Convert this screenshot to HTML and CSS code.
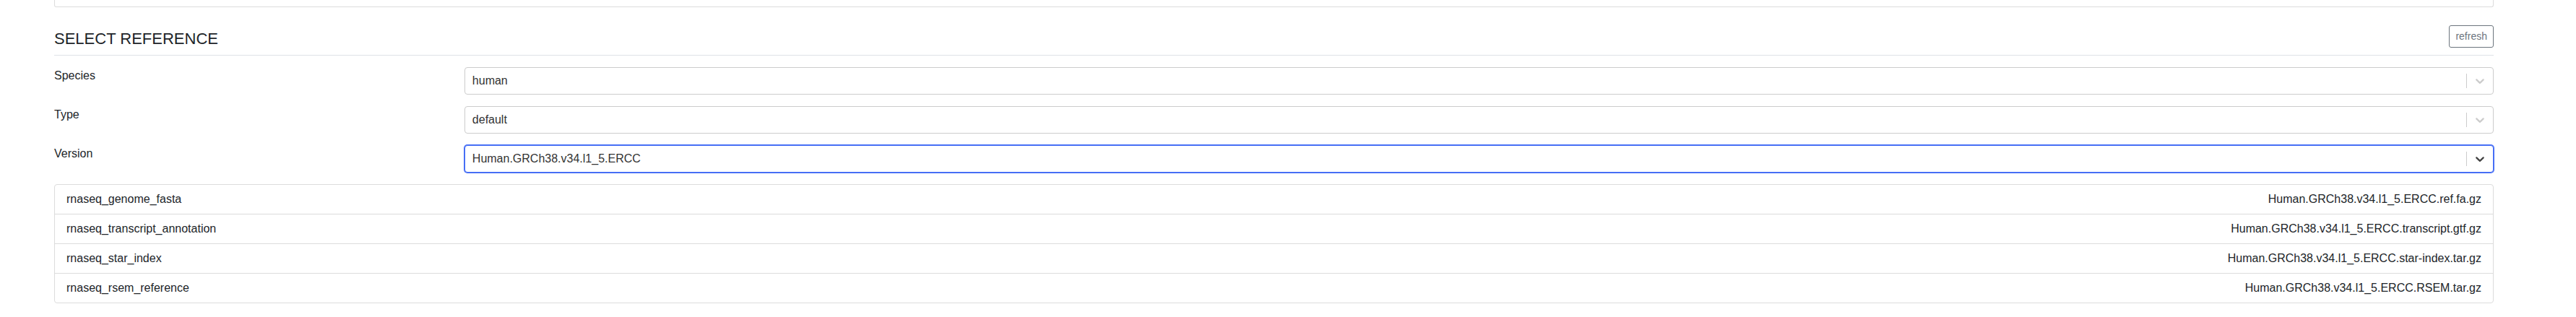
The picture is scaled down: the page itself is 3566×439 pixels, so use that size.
FILE: index.html
```html
<!DOCTYPE html>
<html lang="en">
<head>
<meta charset="utf-8">
<title>Select reference</title>
<link rel="stylesheet" href="styles.css">
</head>
<body>
<div class="page">
  <div class="prev-card"></div>

  <div class="section-header">
    <h4 class="section-title">SELECT REFERENCE</h4>
    <button class="btn-refresh" type="button">refresh</button>
  </div>

  <div class="form-row">
    <label class="form-label">Species</label>
    <div class="select">
      <div class="select-value">human</div>
      <span class="select-sep"></span>
      <span class="select-arrow">
        <svg width="20" height="20" viewBox="0 0 20 20"><path d="M4.516 7.548c0.436-0.446 1.043-0.481 1.576 0l3.908 3.747 3.908-3.747c0.533-0.481 1.141-0.446 1.574 0 0.436 0.445 0.408 1.197 0 1.615-0.406 0.418-4.695 4.502-4.695 4.502-0.217 0.223-0.502 0.335-0.787 0.335s-0.57-0.112-0.789-0.335c0 0-4.287-4.084-4.695-4.502s-0.436-1.17 0-1.615z"/></svg>
      </span>
    </div>
  </div>

  <div class="form-row">
    <label class="form-label">Type</label>
    <div class="select">
      <div class="select-value">default</div>
      <span class="select-sep"></span>
      <span class="select-arrow">
        <svg width="20" height="20" viewBox="0 0 20 20"><path d="M4.516 7.548c0.436-0.446 1.043-0.481 1.576 0l3.908 3.747 3.908-3.747c0.533-0.481 1.141-0.446 1.574 0 0.436 0.445 0.408 1.197 0 1.615-0.406 0.418-4.695 4.502-4.695 4.502-0.217 0.223-0.502 0.335-0.787 0.335s-0.57-0.112-0.789-0.335c0 0-4.287-4.084-4.695-4.502s-0.436-1.17 0-1.615z"/></svg>
      </span>
    </div>
  </div>

  <div class="form-row">
    <label class="form-label">Version</label>
    <div class="select select-focused">
      <div class="select-value">Human.GRCh38.v34.l1_5.ERCC</div>
      <span class="select-sep"></span>
      <span class="select-arrow">
        <svg width="20" height="20" viewBox="0 0 20 20"><path d="M4.516 7.548c0.436-0.446 1.043-0.481 1.576 0l3.908 3.747 3.908-3.747c0.533-0.481 1.141-0.446 1.574 0 0.436 0.445 0.408 1.197 0 1.615-0.406 0.418-4.695 4.502-4.695 4.502-0.217 0.223-0.502 0.335-0.787 0.335s-0.57-0.112-0.789-0.335c0 0-4.287-4.084-4.695-4.502s-0.436-1.17 0-1.615z"/></svg>
      </span>
    </div>
  </div>

  <ul class="file-list">
    <li class="file-item"><span>rnaseq_genome_fasta</span><span>Human.GRCh38.v34.l1_5.ERCC.ref.fa.gz</span></li>
    <li class="file-item"><span>rnaseq_transcript_annotation</span><span>Human.GRCh38.v34.l1_5.ERCC.transcript.gtf.gz</span></li>
    <li class="file-item"><span>rnaseq_star_index</span><span>Human.GRCh38.v34.l1_5.ERCC.star-index.tar.gz</span></li>
    <li class="file-item"><span>rnaseq_rsem_reference</span><span>Human.GRCh38.v34.l1_5.ERCC.RSEM.tar.gz</span></li>
  </ul>
</div>
</body>
</html>
```

FILE: styles.css
```css
* {
  box-sizing: border-box;
}

html, body {
  margin: 0;
  padding: 0;
  background: #ffffff;
}

body {
  font-family: "Liberation Sans", Arial, Helvetica, sans-serif;
  font-size: 16px;
  line-height: 24px;
  color: #212529;
}

.page {
  padding: 0 114px 0 75px;
}

.prev-card {
  height: 10px;
  border: 1px solid #dcdcdc;
  border-top: none;
  border-radius: 0 0 3px 3px;
}

.section-header {
  margin-top: 25px;
  display: flex;
  justify-content: space-between;
  align-items: flex-end;
  padding-bottom: 9px;
  border-bottom: 1px solid #dee2e6;
}

.section-title {
  margin: 0;
  font-size: 22px;
  line-height: 26px;
  font-weight: 400;
  color: #212529;
}

.btn-refresh {
  margin: 0 0 1px 0;
  font-family: "Liberation Sans", Arial, Helvetica, sans-serif;
  font-size: 14px;
  line-height: 21px;
  padding: 4px 8px;
  border: 1px solid #6c757d;
  border-radius: 3px;
  background: #ffffff;
  color: #6c757d;
}

.form-row {
  margin-top: 16px;
  display: grid;
  grid-template-columns: 2fr 10fr;
  column-gap: 6px;
  align-items: start;
}

.form-label {
  display: block;
  line-height: 24px;
}

.select {
  display: flex;
  align-items: stretch;
  height: 38px;
  border: 1px solid #cccccc;
  border-radius: 4px;
  background: #ffffff;
  color: #333333;
}

.select-focused {
  border-color: #466ef5;
  box-shadow: 0 0 0 1px #466ef5;
}

.select-value {
  flex: 1;
  display: flex;
  align-items: center;
  padding: 2px 10px;
}

.select-sep {
  width: 1px;
  margin: 8px 0;
  background: #cccccc;
}

.select-arrow {
  display: flex;
  align-items: center;
  padding: 8px;
  color: #cccccc;
}

.select-focused .select-arrow {
  color: #444444;
}

.select-arrow svg {
  display: block;
  fill: currentColor;
}

.file-list {
  list-style: none;
  margin: 16px 0 0 0;
  padding: 0;
  border: 1px solid #dcdcdc;
  border-radius: 4px;
}

.file-item {
  display: flex;
  justify-content: space-between;
  padding: 8px 16px;
  line-height: 24px;
  border-top: 1px solid #dcdcdc;
}

.file-item:first-child {
  border-top: none;
}
```
